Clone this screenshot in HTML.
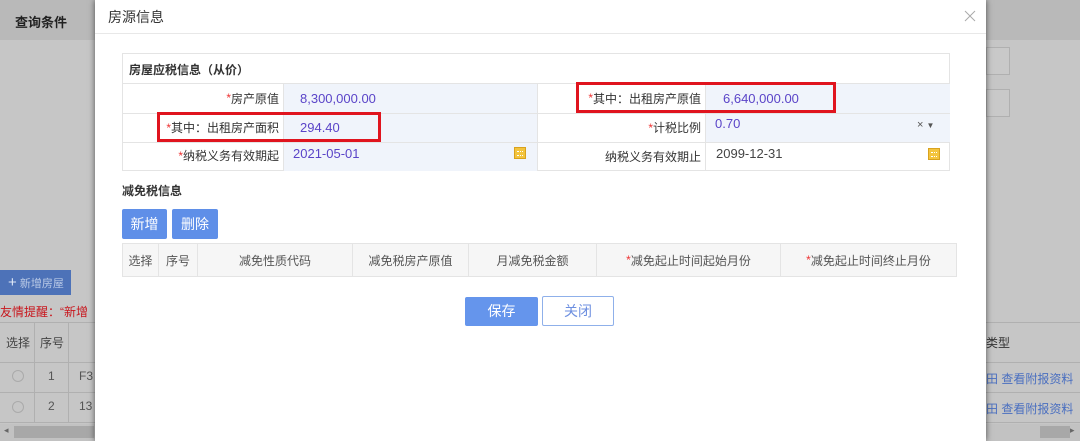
<!DOCTYPE html>
<html><head><meta charset="utf-8"><style>
*{box-sizing:border-box;margin:0;padding:0}
body{width:1080px;height:441px;overflow:hidden;background:#c6c6c6;font-family:"Liberation Sans","Noto Sans CJK SC",sans-serif;font-size:12px;color:#333;position:relative}
.abs{position:absolute}
.cell{position:absolute;display:flex;align-items:center}
</style></head><body>
<div class="abs" style="left:0;top:0;width:1080px;height:40px;background:#b9b9b9"></div>
<div class="abs" style="left:15px;top:12px;font-weight:bold;font-size:13px;color:#222">查询条件</div>
<div class="abs" style="left:986px;top:47px;width:24px;height:28px;border:1px solid #b0b0b0;background:#c9c9c9"></div>
<div class="abs" style="left:986px;top:89px;width:24px;height:28px;border:1px solid #b0b0b0;background:#c9c9c9"></div>
<div class="abs" style="left:0;top:270px;width:71px;height:25px;background:#4d72b8;color:#b9c9e6;font-size:11px;line-height:25px;padding-left:8px"><span style="font-size:15px;color:#dfe8f7">+</span> 新增房屋</div>
<div class="abs" style="left:0;top:303px;color:#c8161d;font-size:12px">友情提醒：“新增</div>
<div class="abs" style="left:0;top:322px;width:1080px;height:101px;background:#c6c6c6;border-top:1px solid #b0b0b0"></div>
<div class="abs" style="left:0;top:362px;width:1080px;border-top:1px solid #b0b0b0"></div>
<div class="abs" style="left:0;top:392px;width:1080px;border-top:1px solid #b0b0b0"></div>
<div class="abs" style="left:0;top:422px;width:1080px;border-top:1px solid #b0b0b0"></div>
<div class="abs" style="left:34px;top:322px;height:100px;border-left:1px solid #b0b0b0"></div>
<div class="abs" style="left:68px;top:322px;height:100px;border-left:1px solid #b0b0b0"></div>
<div class="abs" style="left:6px;top:334px;color:#444">选择</div>
<div class="abs" style="left:40px;top:334px;color:#444">序号</div>
<div class="abs" style="left:12px;top:370px;width:12px;height:12px;border-radius:50%;border:1px solid #aaa"></div>
<div class="abs" style="left:12px;top:401px;width:12px;height:12px;border-radius:50%;border:1px solid #aaa"></div>
<div class="abs" style="left:48px;top:369px;color:#555">1</div>
<div class="abs" style="left:48px;top:399px;color:#555">2</div>
<div class="abs" style="left:79px;top:369px;color:#555">F3</div>
<div class="abs" style="left:79px;top:399px;color:#555">13</div>
<div class="abs" style="left:986px;top:334px;color:#333">类型</div>
<div class="abs" style="left:986px;top:370px;color:#4a6fc0">田 查看附报资料</div>
<div class="abs" style="left:986px;top:400px;color:#4a6fc0">田 查看附报资料</div>
<div class="abs" style="left:0;top:424px;width:1080px;height:17px;background:#c2c2c2"></div>
<div class="abs" style="left:14px;top:426px;width:80px;height:12px;background:#a8a8a8"></div>
<div class="abs" style="left:1040px;top:426px;width:30px;height:12px;background:#a8a8a8"></div>
<div class="abs" style="left:4px;top:425px;color:#666;font-size:9px">◂</div>
<div class="abs" style="left:1070px;top:425px;color:#666;font-size:9px">▸</div>

<div class="abs" style="left:95px;top:0;width:891px;height:441px;background:#fff;box-shadow:0 0 6px rgba(0,0,0,.6)">
 <div class="abs" style="left:13px;top:7px;font-size:14px;color:#333">房源信息</div>
 <div class="abs" style="left:0;top:33px;width:891px;border-top:1px solid #e8e8e8"></div>
 <svg class="abs" style="left:869px;top:10px" width="12" height="12" viewBox="0 0 12 12"><path d="M1 1L11 11M11 1L1 11" stroke="#aaa" stroke-width="1"/></svg>
</div>

<div class="abs" style="left:122px;top:53px;width:828px;height:118px;border:1px solid #e4e4e4"></div>
<div class="abs" style="left:129px;top:61px;font-weight:bold;font-size:12px;color:#333">房屋应税信息（从价）</div>
<div class="abs" style="left:283px;top:83px;width:254px;height:88px;background:#f0f4fb"></div>
<div class="abs" style="left:705px;top:83px;width:245px;height:59px;background:#f0f4fb"></div>
<div class="abs" style="left:122px;top:83px;width:828px;border-top:1px solid #e4e4e4"></div>
<div class="abs" style="left:122px;top:113px;width:828px;border-top:1px solid #e4e4e4"></div>
<div class="abs" style="left:122px;top:142px;width:828px;border-top:1px solid #e4e4e4"></div>
<div class="abs" style="left:283px;top:83px;height:88px;border-left:1px solid #e4e4e4"></div>
<div class="abs" style="left:537px;top:83px;height:88px;border-left:1px solid #e4e4e4"></div>
<div class="abs" style="left:705px;top:83px;height:88px;border-left:1px solid #e4e4e4"></div>

<div class="cell" style="left:122px;top:83px;width:157px;height:30px;justify-content:flex-end"><span style="color:#e33">*</span>房产原值</div>
<div class="cell" style="left:122px;top:113px;width:157px;height:29px;justify-content:flex-end"><span style="color:#e33">*</span>其中：出租房产面积</div>
<div class="cell" style="left:122px;top:142px;width:157px;height:29px;justify-content:flex-end;padding-bottom:2px"><span style="color:#e33">*</span>纳税义务有效期起</div>
<div class="cell" style="left:537px;top:83px;width:164px;height:30px;justify-content:flex-end"><span style="color:#e33">*</span>其中：出租房产原值</div>
<div class="cell" style="left:537px;top:113px;width:164px;height:29px;justify-content:flex-end"><span style="color:#e33">*</span>计税比例</div>
<div class="cell" style="left:537px;top:142px;width:164px;height:29px;justify-content:flex-end">纳税义务有效期止</div>

<div class="cell" style="left:300px;top:83px;height:30px;color:#5a44c8;font-size:13px">8,300,000.00</div>
<div class="cell" style="left:300px;top:113px;height:29px;color:#5a44c8;font-size:13px">294.40</div>
<div class="abs" style="left:293px;top:146px;color:#5a44c8;font-size:13px">2021-05-01</div>
<div class="cell" style="left:723px;top:83px;height:30px;color:#5a44c8;font-size:13px">6,640,000.00</div>
<div class="abs" style="left:715px;top:116px;color:#5a44c8;font-size:13px">0.70</div>
<div class="abs" style="left:716px;top:146px;color:#444;font-size:13px">2099-12-31</div>
<div class="abs" style="left:917px;top:119px;color:#555;font-size:11px">× <span style="font-size:8px">▼</span></div>
<div class="abs" style="left:514px;top:147px;width:12px;height:12px;background:#f3c43e;border:1px solid #d9a21e"><div style="margin:3px 2px;height:5px;border-top:1px dotted #fff;border-bottom:1px dotted #fff"></div></div>
<div class="abs" style="left:928px;top:148px;width:12px;height:12px;background:#f3c43e;border:1px solid #d9a21e"><div style="margin:3px 2px;height:5px;border-top:1px dotted #fff;border-bottom:1px dotted #fff"></div></div>

<div class="abs" style="left:157px;top:112px;width:224px;height:30px;border:3px solid #e0141e"></div>
<div class="abs" style="left:576px;top:82px;width:260px;height:31px;border:3px solid #e0141e"></div>

<div class="abs" style="left:122px;top:182px;font-weight:bold;color:#333">减免税信息</div>
<div class="abs" style="left:122px;top:209px;width:45px;height:30px;background:#5f8fe8;color:#fff;font-size:14px;line-height:30px;text-align:center;border-radius:2px">新增</div>
<div class="abs" style="left:172px;top:209px;width:46px;height:30px;background:#5f8fe8;color:#fff;font-size:14px;line-height:30px;text-align:center;border-radius:2px">删除</div>

<div class="abs" style="left:122px;top:243px;width:835px;height:34px;background:#f6f6f6;border:1px solid #e4e4e4;display:flex;color:#555">
 <div style="width:36px;border-right:1px solid #e4e4e4;display:flex;align-items:center;justify-content:center">选择</div>
 <div style="width:39px;border-right:1px solid #e4e4e4;display:flex;align-items:center;justify-content:center">序号</div>
 <div style="width:155px;border-right:1px solid #e4e4e4;display:flex;align-items:center;justify-content:center">减免性质代码</div>
 <div style="width:116px;border-right:1px solid #e4e4e4;display:flex;align-items:center;justify-content:center">减免税房产原值</div>
 <div style="width:128px;border-right:1px solid #e4e4e4;display:flex;align-items:center;justify-content:center">月减免税金额</div>
 <div style="width:184px;border-right:1px solid #e4e4e4;display:flex;align-items:center;justify-content:center"><span style="color:#e33">*</span>减免起止时间起始月份</div>
 <div style="flex:1;display:flex;align-items:center;justify-content:center"><span style="color:#e33">*</span>减免起止时间终止月份</div>
</div>

<div class="abs" style="left:465px;top:297px;width:73px;height:29px;background:#6595ec;color:#fff;font-size:14px;line-height:29px;text-align:center;border-radius:2px">保存</div>
<div class="abs" style="left:542px;top:296px;width:72px;height:30px;border:1px solid #8fb0ea;color:#6d8fe0;font-size:14px;line-height:28px;text-align:center;border-radius:2px;background:#fff">关闭</div>
</body></html>
